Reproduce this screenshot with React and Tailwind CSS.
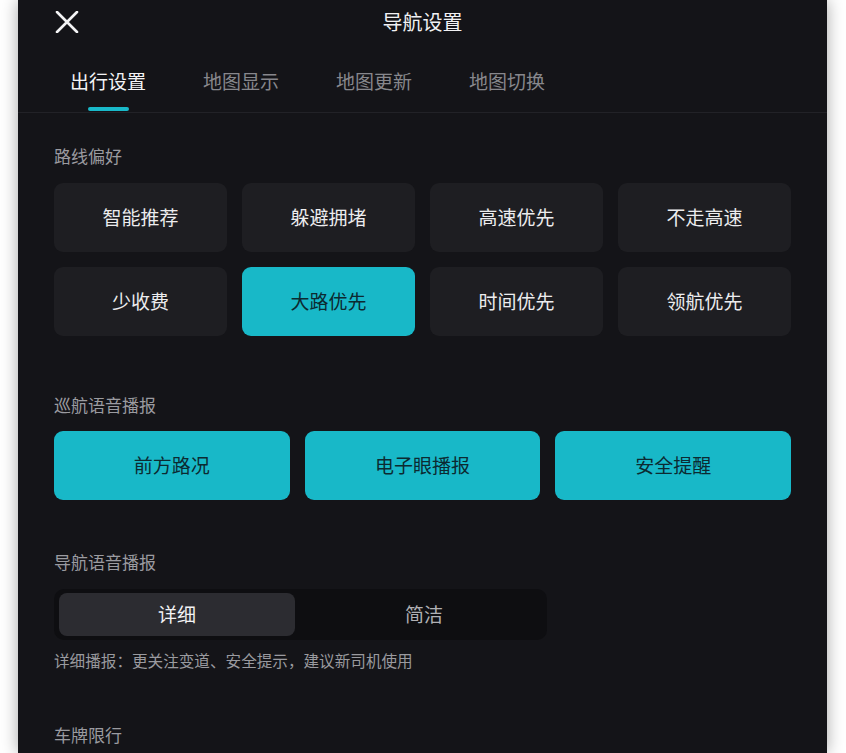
import React, { useState } from 'react';

const routeOptions = ['智能推荐', '躲避拥堵', '高速优先', '不走高速', '少收费', '大路优先', '时间优先', '领航优先'];
const cruiseOptions = ['前方路况', '电子眼播报', '安全提醒'];
const tabs = ['出行设置', '地图显示', '地图更新', '地图切换'];

const CloseIcon = () => (
  <svg width="24" height="22" viewBox="0 0 24 22" fill="none">
    <path d="M2 1 L22 21 M22 1 L2 21" stroke="#f4f4f5" strokeWidth="2.6" strokeLinecap="round" />
  </svg>
);

const SectionLabel = ({ children }) => (
  <div className="text-[17px] leading-[24px] text-[#9b9ba0]">{children}</div>
);

const App = () => {
  const [route, setRoute] = useState('大路优先');
  const [cruise, setCruise] = useState(['前方路况', '电子眼播报', '安全提醒']);
  const [mode, setMode] = useState('详细');

  return (
    <div className="min-h-screen bg-white font-['Noto_Sans_CJK_SC','Noto_Sans',sans-serif]">
      <div className="ml-[18px] w-[809px] min-h-[753px] bg-[#141418] shadow-[0_0_16px_rgba(0,0,0,0.35)]">
        {/* Header */}
        <div className="grid grid-cols-[1fr_auto_1fr] items-center h-[44px] px-[36px]">
          <button className="justify-self-start w-[26px] h-[24px] flex items-center justify-center">
            <CloseIcon />
          </button>
          <div className="text-[20px] leading-[28px] text-[#f1f1f3]">导航设置</div>
          <div />
        </div>

        {/* Tabs */}
        <div className="flex gap-[57px] pl-[52px] pt-[25px] pb-[1px] border-b border-[#222227]">
          {tabs.map((t, i) => (
            <div key={t} className="flex flex-col items-center">
              <div className={`text-[19px] leading-[24px] ${i === 0 ? 'text-[#f4f4f6]' : 'text-[#87878c]'}`}>{t}</div>
              <div className={`mt-[14px] h-[4px] w-[41px] rounded-full ${i === 0 ? 'bg-[#19b9c9]' : 'bg-transparent'}`} />
            </div>
          ))}
        </div>

        <div className="px-[36px]">
          {/* 路线偏好 */}
          <div className="pt-[31px]">
            <SectionLabel>路线偏好</SectionLabel>
            <div className="grid grid-cols-4 gap-[15px] mt-[15px]">
              {routeOptions.map((o) => (
                <button
                  key={o}
                  onClick={() => setRoute(o)}
                  className={`h-[69px] rounded-[9px] text-[19px] ${route === o ? 'bg-[#18b8c8] text-[#0c2a31]' : 'bg-[#1e1e22] text-[#ececee]'}`}
                >
                  {o}
                </button>
              ))}
            </div>
          </div>

          {/* 巡航语音播报 */}
          <div className="pt-[57px]">
            <SectionLabel>巡航语音播报</SectionLabel>
            <div className="grid grid-cols-3 gap-[15px] mt-[14px]">
              {cruiseOptions.map((o) => {
                const on = cruise.includes(o);
                return (
                  <button
                    key={o}
                    onClick={() => setCruise(on ? cruise.filter((c) => c !== o) : [...cruise, o])}
                    className={`h-[69px] rounded-[9px] text-[19px] ${on ? 'bg-[#18b8c8] text-[#0c2a31]' : 'bg-[#1e1e22] text-[#ececee]'}`}
                  >
                    {o}
                  </button>
                );
              })}
            </div>
          </div>

          {/* 导航语音播报 */}
          <div className="pt-[50px]">
            <SectionLabel>导航语音播报</SectionLabel>
            <div className="mt-[15px] w-[493px] h-[51px] p-[4px] pl-[5px] rounded-[10px] bg-[#0e0e11] flex">
              {['详细', '简洁'].map((m) => (
                <button
                  key={m}
                  onClick={() => setMode(m)}
                  className={`h-[43px] rounded-[8px] text-[19px] ${m === '详细' ? 'w-[236px]' : 'flex-1 pl-[10px]'} ${mode === m ? 'bg-[#2c2c31] text-[#f2f2f4]' : 'text-[#b0b0b4]'}`}
                >
                  {m}
                </button>
              ))}
            </div>
            <div className="mt-[9px] text-[15.6px] leading-[22px] text-[#9a9a9f]">
              详细播报：更关注变道、安全提示，建议新司机使用
            </div>
          </div>

          {/* 车牌限行 */}
          <div className="pt-[52px]">
            <SectionLabel>车牌限行</SectionLabel>
          </div>
        </div>
      </div>
    </div>
  );
};

export default App;
